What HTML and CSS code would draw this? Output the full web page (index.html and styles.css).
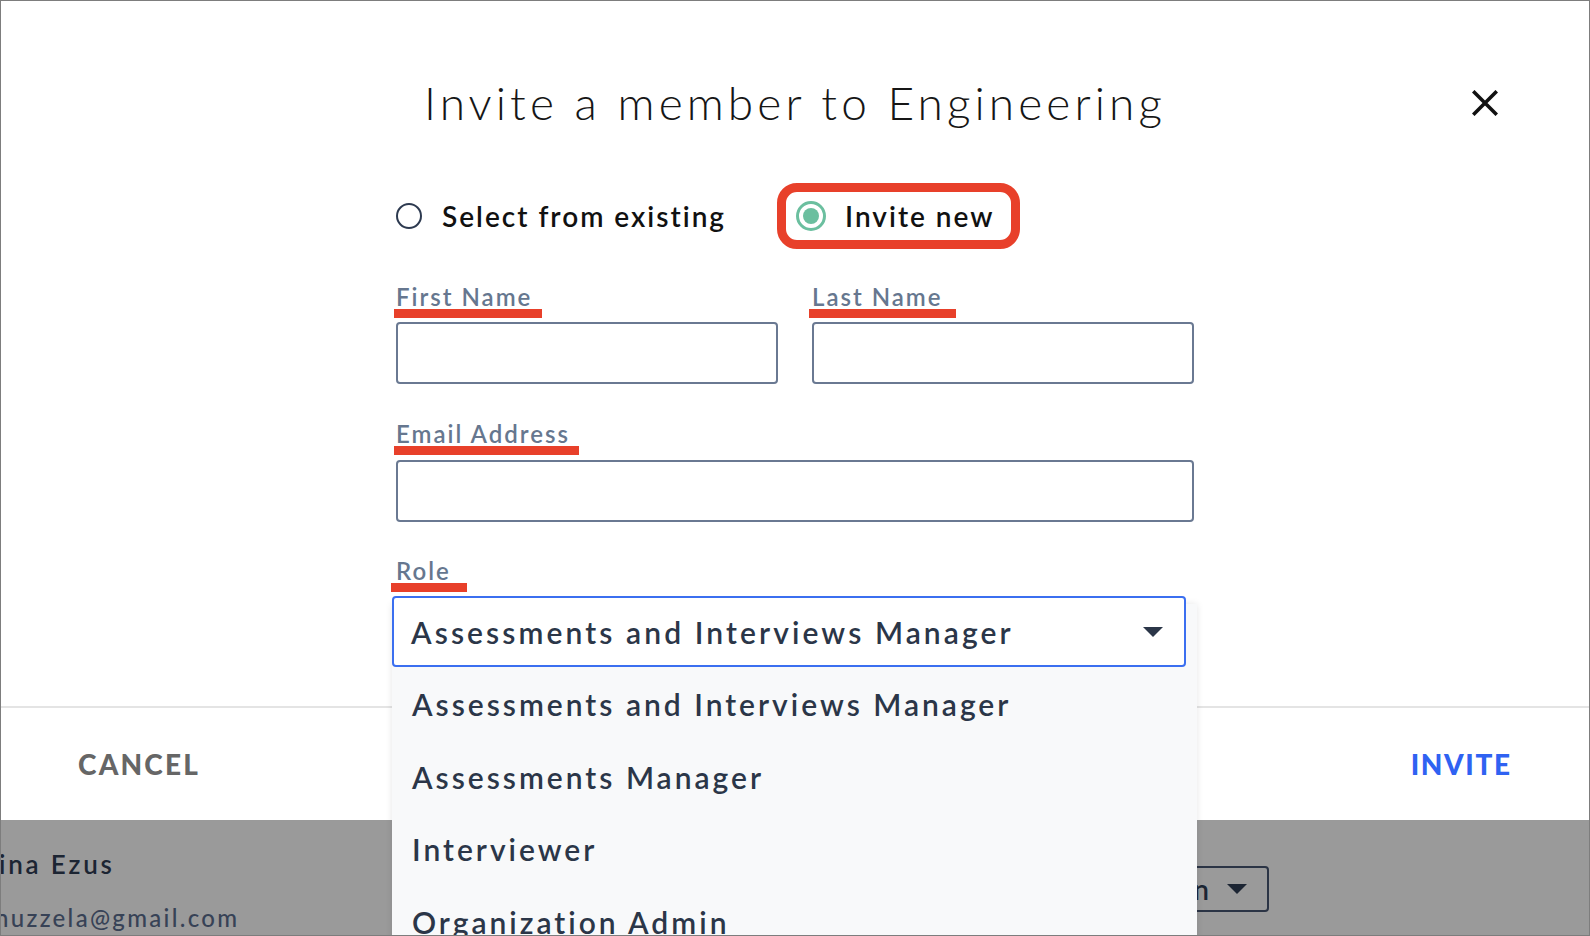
FILE: index.html
```html
<!DOCTYPE html>
<html lang="en">
<head>
<meta charset="utf-8">
<title>Invite a member to Engineering</title>
<link rel="stylesheet" href="styles.css">
</head>
<body>
<div class="screen">
  <div class="modal">
    <header class="modal-head">
      <span class="head-spacer"></span>
      <h1 class="title">Invite a member to Engineering</h1>
      <button class="close" type="button" aria-label="Close">
        <svg width="26" height="26" viewBox="0 0 26 26"><path d="M2.5 2.5 L23.5 23.5 M23.5 2.5 L2.5 23.5" stroke="#111" stroke-width="3.6" stroke-linecap="square" fill="none"/></svg>
      </button>
    </header>

    <div class="form">
      <div class="choice-row">
        <div class="choice">
          <span class="radio"></span>
          <span class="choice-text">Select from existing</span>
        </div>
        <div class="highlight">
          <div class="choice">
            <span class="radio radio-on"><span class="radio-dot"></span></span>
            <span class="choice-text">Invite new</span>
          </div>
        </div>
      </div>

      <div class="name-row">
        <div class="field">
          <div class="label label-first">First Name</div>
          <div class="input"></div>
        </div>
        <div class="field">
          <div class="label label-last">Last Name</div>
          <div class="input"></div>
        </div>
      </div>

      <div class="field field-email">
        <div class="label label-email">Email Address</div>
        <div class="input"></div>
      </div>

      <div class="field field-role">
        <div class="label label-role">Role</div>
        <div class="select">
          <span class="select-value">Assessments and Interviews Manager</span>
          <svg class="caret" width="20" height="10" viewBox="0 0 20 10"><path d="M0 0 H20 L10 10 Z" fill="#2b3648"/></svg>
        </div>
      </div>
    </div>

    <footer class="modal-foot">
      <button class="btn btn-cancel" type="button">CANCEL</button>
      <button class="btn btn-invite" type="button">INVITE</button>
    </footer>
  </div>

  <div class="page-row">
    <div class="person">
      <div class="person-name">ina Ezus</div>
      <div class="person-email">nuzzela@gmail.com</div>
    </div>
    <div class="page-select">
      <span class="page-select-value">Admin</span>
      <svg width="20" height="10" viewBox="0 0 20 10"><path d="M0 0 H20 L10 10 Z" fill="#1c2533"/></svg>
    </div>
  </div>

  <ul class="menu">
    <li class="menu-item">Assessments and Interviews Manager</li>
    <li class="menu-item">Assessments Manager</li>
    <li class="menu-item">Interviewer</li>
    <li class="menu-item">Organization Admin</li>
  </ul>
</div>
</body>
</html>
```

FILE: styles.css
```css
* { box-sizing: border-box; }

html, body {
  margin: 0;
  padding: 0;
  background: #ffffff;
}

body {
  font-family: "Lato", "Open Sans", "Liberation Sans", sans-serif;
}

.screen {
  position: relative;
  width: 1590px;
  height: 936px;
  border: 1px solid #7d7d7d;
  background: #9a9a9a;
  overflow: hidden;
  display: flex;
  flex-direction: column;
}

.modal {
  height: 819px;
  background: #ffffff;
  display: flex;
  flex-direction: column;
  flex: none;
}

/* header */
.modal-head {
  display: grid;
  grid-template-columns: 1fr auto 1fr;
  align-items: center;
  padding-top: 74px;
}

.title {
  margin: 0;
  font-weight: 300;
  font-size: 46px;
  line-height: 56px;
  letter-spacing: 4.1px;
  color: #161616;
  white-space: nowrap;
}

.close {
  justify-self: end;
  margin-right: 91px;
  width: 26px;
  height: 26px;
  padding: 0;
  border: 0;
  background: transparent;
  display: flex;
}

/* form */
.form {
  width: 798px;
  margin: 0 auto;
  display: flex;
  flex-direction: column;
}

.choice-row {
  display: flex;
  align-items: center;
  height: 66px;
  margin-top: 52px;
}

.choice {
  display: flex;
  align-items: center;
  gap: 20px;
}

.choice-text {
  font-size: 28px;
  font-weight: 600;
  letter-spacing: 2px;
  color: #111111;
  line-height: 34px;
  white-space: nowrap;
}

.radio {
  width: 26px;
  height: 26px;
  border: 2px solid #2d3a50;
  border-radius: 50%;
  flex: none;
}

.radio-on {
  width: 30px;
  height: 30px;
  border: 3px solid #6bbf9f;
  display: flex;
  align-items: center;
  justify-content: center;
}

.radio-dot {
  width: 16px;
  height: 16px;
  border-radius: 50%;
  background: #6bbf9f;
}

.highlight {
  margin-left: 51px;
  height: 66px;
  border: 9px solid #e8402a;
  border-radius: 20px;
  display: flex;
  align-items: center;
  padding: 0 16px 0 10px;
}

.highlight .choice { gap: 19px; }

.name-row {
  display: grid;
  grid-template-columns: 1fr 1fr;
  column-gap: 34px;
  margin-top: 36px;
}

.field {
  display: flex;
  flex-direction: column;
  align-items: flex-start;
}

.field-email { margin-top: 38px; }
.field-role { margin-top: 37px; }

.label {
  font-size: 24px;
  line-height: 24px;
  font-weight: 600;
  letter-spacing: 2px;
  color: #66778f;
  border-bottom: 9px solid #e8402a;
  padding: 0 10px 0 2px;
  margin-left: -2px;
  white-space: nowrap;
}

.label-last { margin-left: -3px; padding-left: 3px; padding-right: 13px; }
.label-email { padding-right: 9px; }
.label-role { margin-left: -5px; padding-left: 5px; padding-right: 16px; }

.input {
  align-self: stretch;
  height: 62px;
  margin-top: 4px;
  border: 2px solid #6a7992;
  border-radius: 4px;
  background: #ffffff;
}

.field-email .input { margin-top: 5px; }

.select {
  position: relative;
  z-index: 2;
  width: 794px;
  height: 71px;
  margin-top: 4px;
  margin-left: -4px;
  border: 2px solid #3b6ff0;
  border-radius: 4px;
  display: flex;
  align-items: center;
  justify-content: space-between;
  padding: 0 21px 0 17px;
  background: #ffffff;
}

.select-value {
  font-size: 30px;
  font-weight: 600;
  letter-spacing: 3.1px;
  color: #2b3648;
  white-space: nowrap;
}

.caret { flex: none; }

/* footer */
.modal-foot {
  margin-top: auto;
  height: 114px;
  border-top: 2px solid #e4e4e4;
  display: flex;
  align-items: center;
  justify-content: space-between;
  padding: 0 79px 0 77px;
}

.btn {
  border: 0;
  background: transparent;
  padding: 0;
  font-family: "Lato", "Open Sans", "Liberation Sans", sans-serif;
  font-size: 28px;
  font-weight: 900;
  letter-spacing: 2.2px;
  line-height: 34px;
}

.btn-invite { letter-spacing: 1.6px; margin-right: -1.6px; }

.btn-cancel { color: #666666; }
.btn-invite { color: #2f62f2; }

/* background page */
.page-row {
  flex: 1;
  display: flex;
  align-items: flex-start;
  justify-content: space-between;
}

.person {
  padding-top: 28px;
  margin-left: -2px;
}

.person-name {
  font-size: 26px;
  line-height: 32px;
  font-weight: 600;
  letter-spacing: 2.8px;
  color: #1c2533;
  white-space: nowrap;
}

.person-email {
  margin-top: 23px;
  margin-left: -4px;
  font-size: 24px;
  line-height: 30px;
  font-weight: 500;
  letter-spacing: 2.3px;
  color: #374256;
  white-space: nowrap;
}

.page-select {
  margin-top: 46px;
  margin-right: 320px;
  width: 160px;
  height: 46px;
  border: 2px solid #2b3445;
  border-radius: 4px;
  display: flex;
  align-items: center;
  justify-content: flex-end;
  gap: 18px;
  padding-right: 20px;
}

.page-select-value {
  font-size: 28px;
  font-weight: 600;
  color: #1c2533;
}

/* open dropdown overlay (starts behind the focused select) */
.menu {
  position: absolute;
  z-index: 1;
  left: 391px;
  top: 603px;
  width: 805px;
  height: 360px;
  margin: 0;
  padding: 64px 0 0 0;
  list-style: none;
  background: #f8f9fa;
  box-shadow: 0 0 7px rgba(0, 0, 0, 0.10);
}

.menu-item {
  height: 72.5px;
  line-height: 72.5px;
  padding-left: 20px;
  font-size: 30px;
  font-weight: 600;
  letter-spacing: 3px;
  color: #2b3648;
  white-space: nowrap;
}
```
